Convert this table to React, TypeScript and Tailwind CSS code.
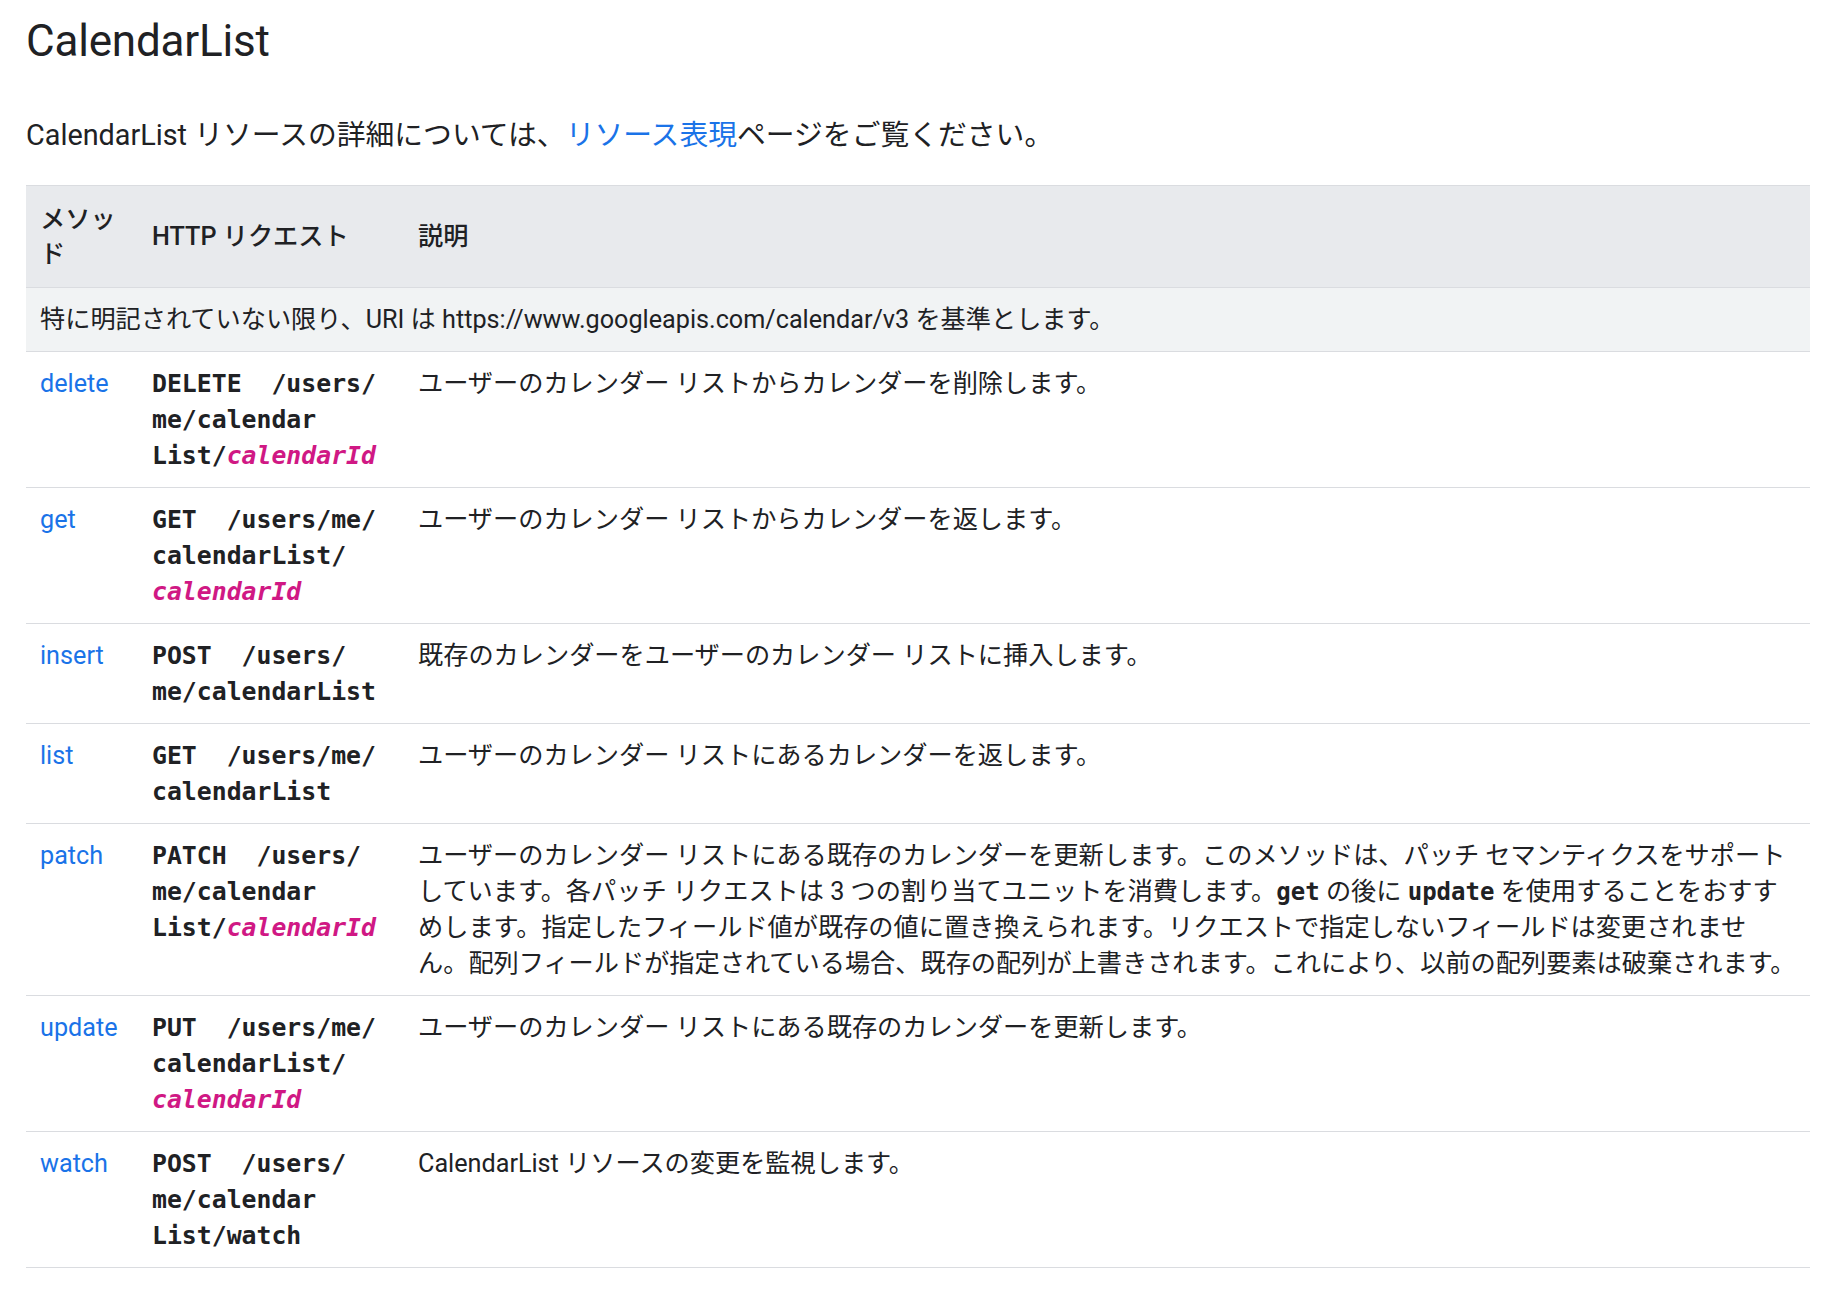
import React from 'react';

type Row = {
  method: string;
  http: string[];
  desc: React.ReactNode;
};

const MONO = "font-['DejaVu_Sans_Mono','Liberation_Mono',monospace]";

// a "|" in a line splits off the <var> part, e.g. "List/|calendarId"
function HttpLine({ line }: { line: string }) {
  if (line.includes('|')) {
    const [head, v] = line.split('|');
    return (
      <>
        {head}
        <span className="italic text-[#d01884]">{v}</span>
      </>
    );
  }
  return <>{line}</>;
}

const Code = ({ children }: { children: React.ReactNode }) => (
  <code className={`${MONO} font-bold text-[24px] text-[#202124]`}>{children}</code>
);

const rows: Row[] = [
  {
    method: 'delete',
    http: ['DELETE\u00a0\u00a0/users/', 'me/calendar', 'List/|calendarId'],
    desc: 'ユーザーのカレンダー リストからカレンダーを削除します。',
  },
  {
    method: 'get',
    http: ['GET\u00a0\u00a0/users/me/', 'calendarList/', '|calendarId'],
    desc: 'ユーザーのカレンダー リストからカレンダーを返します。',
  },
  {
    method: 'insert',
    http: ['POST\u00a0\u00a0/users/', 'me/calendarList'],
    desc: '既存のカレンダーをユーザーのカレンダー リストに挿入します。',
  },
  {
    method: 'list',
    http: ['GET\u00a0\u00a0/users/me/', 'calendarList'],
    desc: 'ユーザーのカレンダー リストにあるカレンダーを返します。',
  },
  {
    method: 'patch',
    http: ['PATCH\u00a0\u00a0/users/', 'me/calendar', 'List/|calendarId'],
    desc: (
      <>
        ユーザーのカレンダー リストにある既存のカレンダーを更新します。このメソッドは、パッチ セマンティクスをサポート
        <br />
        しています。各パッチ リクエストは 3 つの割り当てユニットを消費します。<Code>get</Code> の後に{' '}
        <Code>update</Code> を使用することをおすす
        <br />
        めします。指定したフィールド値が既存の値に置き換えられます。リクエストで指定しないフィールドは変更されませ
        <br />
        ん。配列フィールドが指定されている場合、既存の配列が上書きされます。これにより、以前の配列要素は破棄されます。
      </>
    ),
  },
  {
    method: 'update',
    http: ['PUT\u00a0\u00a0/users/me/', 'calendarList/', '|calendarId'],
    desc: 'ユーザーのカレンダー リストにある既存のカレンダーを更新します。',
  },
  {
    method: 'watch',
    http: ['POST\u00a0\u00a0/users/', 'me/calendar', 'List/watch'],
    desc: 'CalendarList リソースの変更を監視します。',
  },
];

export default function App() {
  return (
    <div className="min-h-[1296px] bg-white pl-[26px] pt-[15px] text-[#202124] font-['Roboto','Noto_Sans_CJK_JP',sans-serif]">
      <h2 className="text-[44px] leading-[52px] font-normal tracking-[-0.2px]">CalendarList</h2>

      <p className="mt-[47px] text-[28.8px] leading-[42px]">
        CalendarList リソースの詳細については、
        <a className="text-[#1a73e8]" href="#">
          リソース表現
        </a>
        ページをご覧ください。
      </p>

      <table className="mt-[29px] w-[1784px] table-fixed border-collapse text-[25.2px]">
        <colgroup>
          <col className="w-[112px]" />
          <col className="w-[266px]" />
          <col />
        </colgroup>
        <thead>
          <tr className="bg-[#e8eaed] border-t border-b border-[#dadce0] text-left align-middle">
            <th className="px-[14px] py-[15.5px] font-medium leading-[35px]">メソッド</th>
            <th className="px-[14px] py-[15.5px] font-medium leading-[35px]">HTTP リクエスト</th>
            <th className="px-[14px] py-[15.5px] font-medium leading-[35px]">説明</th>
          </tr>
        </thead>
        <tbody>
          <tr className="bg-[#f1f3f4] border-b border-[#dadce0]">
            <td colSpan={3} className="px-[14px] py-[13.5px] leading-[36px]">
              特に明記されていない限り、URI は https://www.googleapis.com/calendar/v3 を基準とします。
            </td>
          </tr>
          {rows.map((r) => (
            <tr key={r.method} className="border-b border-[#dadce0] align-top">
              <td className="px-[14px] py-[13.5px] leading-[36px]">
                <a className="text-[#1a73e8]" href="#">
                  {r.method}
                </a>
              </td>
              <td className={`px-[14px] py-[13.5px] leading-[36px] ${MONO} font-bold text-[24.8px]`}>
                {r.http.map((l, i) => (
                  <div key={i}>
                    <HttpLine line={l} />
                  </div>
                ))}
              </td>
              <td className="px-[14px] py-[13.5px] leading-[36px]">{r.desc}</td>
            </tr>
          ))}
        </tbody>
      </table>
    </div>
  );
}
